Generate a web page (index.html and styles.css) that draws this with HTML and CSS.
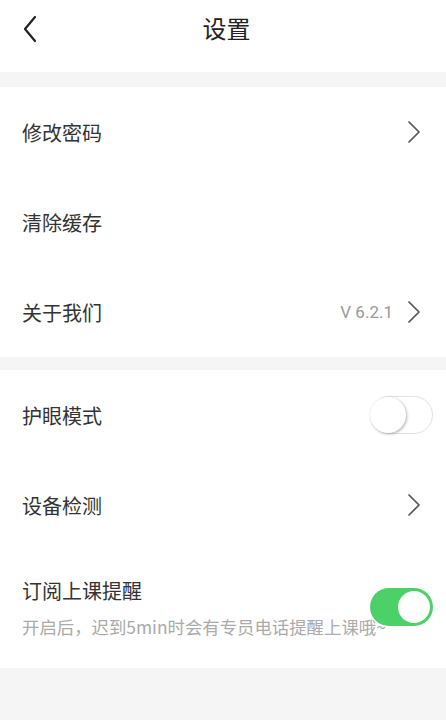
FILE: index.html
```html
<!DOCTYPE html>
<html lang="zh">
<head>
<meta charset="utf-8">
<link rel="stylesheet" href="styles.css">
</head>
<body>
<div class="page">
  <header class="topbar">
    <svg class="back" width="16" height="28" viewBox="0 0 16 28"><path d="M13 2 L3 14 L13 26" fill="none" stroke="#222" stroke-width="2.2" stroke-linecap="round" stroke-linejoin="round"/></svg>
    <h1 class="title">设置</h1>
  </header>
  <div class="gap gap-top"></div>
  <section class="group">
    <div class="row">
      <span class="label">修改密码</span>
      <svg class="chev" width="16" height="24" viewBox="0 0 16 24"><path d="M3 2 L13 12 L3 22" fill="none" stroke="#555" stroke-width="1.7" stroke-linecap="round" stroke-linejoin="round"/></svg>
    </div>
    <div class="row">
      <span class="label">清除缓存</span>
    </div>
    <div class="row">
      <span class="label">关于我们</span>
      <span class="right">
        <span class="value">V 6.2.1</span>
        <svg class="chev" width="16" height="24" viewBox="0 0 16 24"><path d="M3 2 L13 12 L3 22" fill="none" stroke="#555" stroke-width="1.7" stroke-linecap="round" stroke-linejoin="round"/></svg>
      </span>
    </div>
  </section>
  <div class="gap gap-mid"></div>
  <section class="group">
    <div class="row">
      <span class="label">护眼模式</span>
      <span class="switch off"><span class="knob"></span></span>
    </div>
    <div class="row">
      <span class="label">设备检测</span>
      <svg class="chev" width="16" height="24" viewBox="0 0 16 24"><path d="M3 2 L13 12 L3 22" fill="none" stroke="#555" stroke-width="1.7" stroke-linecap="round" stroke-linejoin="round"/></svg>
    </div>
    <div class="row tall">
      <div class="texts">
        <span class="label">订阅上课提醒</span>
        <span class="sub">开启后，迟到5min时会有专员电话提醒上课哦~</span>
      </div>
      <span class="switch on"><span class="knob"></span></span>
    </div>
  </section>
</div>
</body>
</html>
```

FILE: styles.css
```css
* { box-sizing: border-box; }
html, body { margin: 0; padding: 0; }
body {
  background: #f5f5f5;
  font-family: "Noto Sans CJK SC", "Noto Sans", sans-serif;
  color: #333;
}
.page { width: 446px; min-height: 720px; background: #f5f5f5; }
.topbar {
  height: 72px;
  background: #fff;
  display: grid;
  grid-template-columns: 1fr;
  align-items: center;
}
.topbar .back { grid-area: 1 / 1; justify-self: start; margin-left: 22px; margin-top: -14px; }
.topbar .title {
  grid-area: 1 / 1;
  justify-self: center;
  margin: -18px 0 0 7px;
  font-size: 24px;
  font-weight: 400;
  color: #222;
}
.gap-top { height: 15px; }
.gap-mid { height: 13px; }
.group { background: #fff; }
.row {
  height: 90px;
  display: flex;
  align-items: center;
  justify-content: space-between;
  padding: 0 22px 0 22px;
}
.label { font-size: 20px; color: #333; }
.right { display: flex; align-items: center; gap: 13px; }
.value { font-size: 17px; color: #999; font-family: "Roboto", "Noto Sans", sans-serif; }
.chev { margin-right: 2px; }
.switch {
  width: 63px;
  height: 38px;
  border-radius: 19px;
  display: flex;
  align-items: center;
  margin-right: -9px;
}
.switch.off {
  border: 1.5px solid #e2e2e2;
  background: #fff;
  justify-content: flex-start;
}
.switch.off .knob {
  width: 36px; height: 36px; border-radius: 50%;
  background: #fff;
  box-shadow: 1px 1px 3px rgba(0,0,0,0.3);
  margin-left: -1px;
}
.switch.on {
  background: #4cd068;
  justify-content: flex-end;
  padding-right: 3px;
}
.switch.on .knob {
  width: 32px; height: 32px; border-radius: 50%;
  background: #fff;
}
.row.tall {
  height: 118px;
  display: grid;
  grid-template-columns: 1fr;
  align-items: center;
}
.row.tall .texts { grid-area: 1 / 1; display: flex; flex-direction: column; gap: 9px; margin-top: -4px; }
.row.tall .switch { grid-area: 1 / 1; justify-self: end; margin-top: -4px; }
.sub { font-size: 17.4px; color: #aaa; white-space: nowrap; }
```
